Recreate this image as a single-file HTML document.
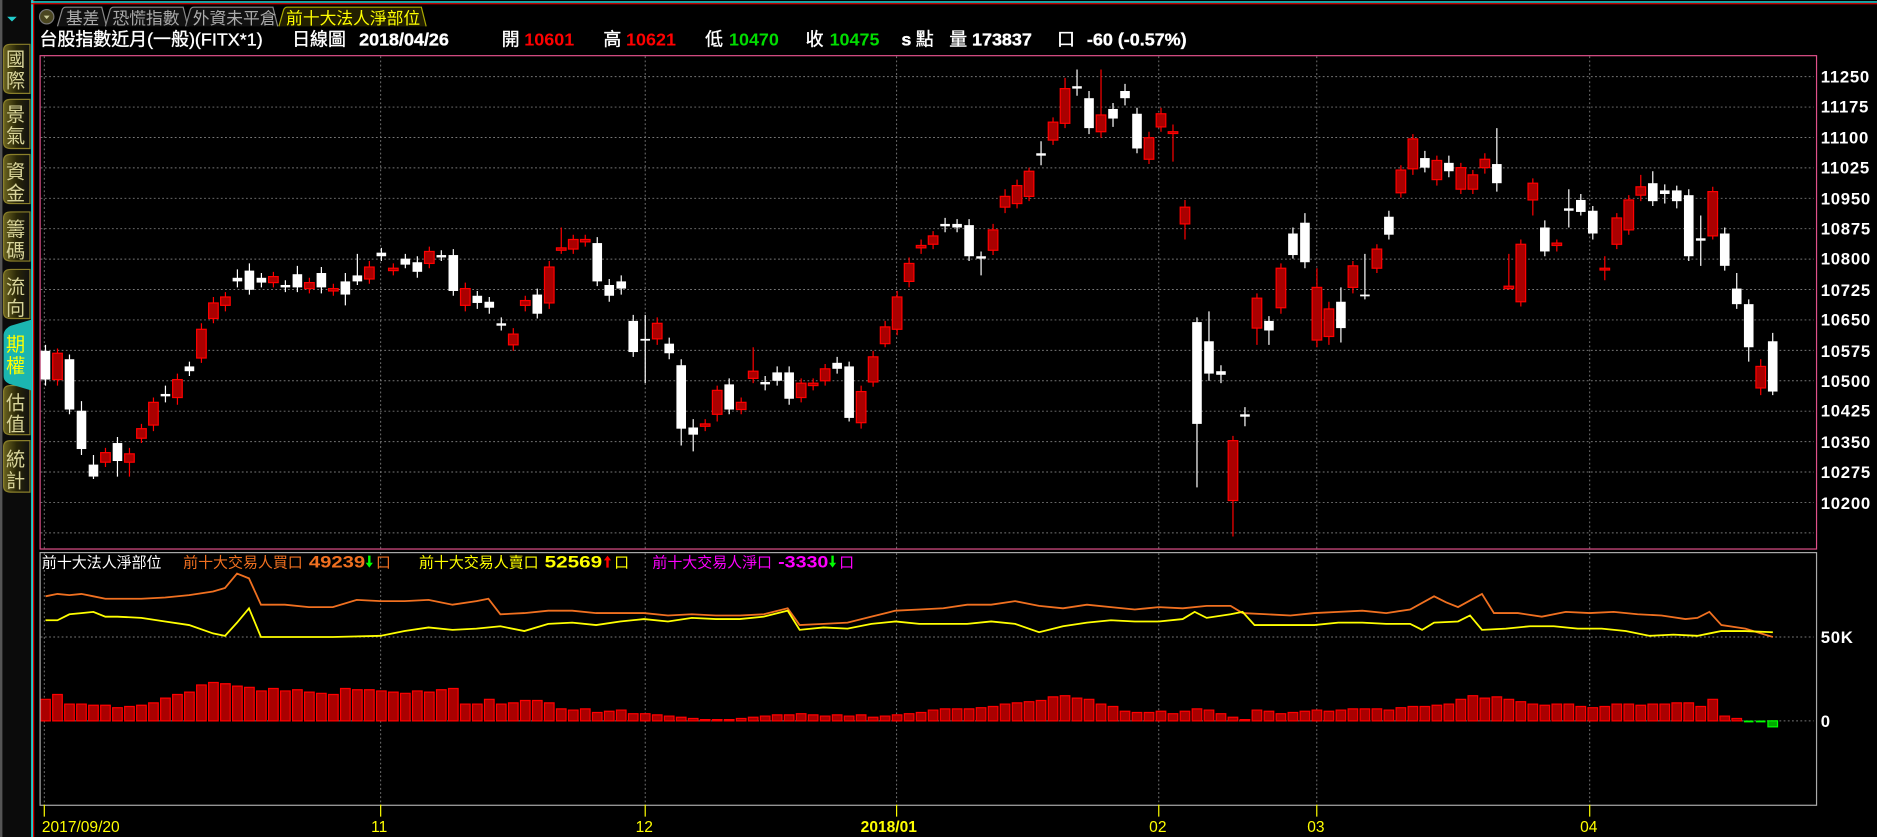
<!DOCTYPE html>
<html><head><meta charset="utf-8"><style>
html,body{margin:0;padding:0;background:#000;overflow:hidden}
svg{display:block}
text{font-family:"Liberation Sans","Noto Sans CJK TC",sans-serif}
.w rect{fill:#fff;width:8px}
.r rect{fill:#a00;stroke:#f00;stroke-width:1;width:8px}
</style></head><body>
<svg width="1877" height="837" viewBox="0 0 1568 699" preserveAspectRatio="none" xmlns="http://www.w3.org/2000/svg">
<rect width="1568" height="699" fill="#000"/>
<rect x="0" y="0" width="26" height="699" fill="#0b0b0b"/>
<rect x="0" y="0" width="2" height="699" fill="#555"/>
<path d="M6 14h8l-4 4z" fill="#2cc"/>
<rect x="26" y="0" width="1.6" height="699" fill="#2cc"/>
<rect x="27.6" y="0" width="1" height="699" fill="#d00"/>
<rect x="26" y="1" width="1542" height="1.3" fill="#2cc"/>
<rect x="26" y="2.6" width="1542" height="1" fill="#d00"/>
<defs><linearGradient id="tg" x1="0" x2="1"><stop offset="0" stop-color="#6b6420"/><stop offset=".5" stop-color="#2a2708"/><stop offset="1" stop-color="#111"/></linearGradient></defs>
<g fill="url(#tg)" stroke="#8a7f2a" stroke-width="1">
<path d="M3 42q0-5 6-5h16v41h-16q-6 0-6-5z"/>
<path d="M3 88q0-5 6-5h16v41h-16q-6 0-6-5z"/>
<path d="M3 134q0-5 6-5h16v41h-16q-6 0-6-5z"/>
<path d="M3 182q0-5 6-5h16v41h-16q-6 0-6-5z"/>
<path d="M3 230q0-5 6-5h16v41h-16q-6 0-6-5z"/>
<path d="M3 327q0-5 6-5h16v41h-16q-6 0-6-5z"/>
<path d="M3 373q0-5 6-5h16v43h-16q-6 0-6-5z"/>
</g>
<path d="M3 280q0-5 6-8l17-5v59l-17-5q-6-2-6-7z" fill="#1bb5b0"/>
<g font-size="16" fill="#d8d49a">
<text x="5" y="55">國</text><text x="5" y="73">際</text>
<text x="5" y="101">景</text><text x="5" y="119">氣</text>
<text x="5" y="149">資</text><text x="5" y="167">金</text>
<text x="5" y="197">籌</text><text x="5" y="215">碼</text>
<text x="5" y="245">流</text><text x="5" y="263">向</text>
<text x="5" y="293" fill="#ff0">期</text><text x="5" y="311" fill="#ff0">權</text>
<text x="5" y="342">估</text><text x="5" y="360">值</text>
<text x="5" y="389">統</text><text x="5" y="407">計</text>
</g>
<circle cx="39" cy="14" r="6" fill="#4a4620" stroke="#777"/>
<path d="M36.5 13h5l-2.5 3z" fill="#cc9"/>
<g fill="#111" stroke="#888" stroke-width="1">
<path d="M48 22l4-14q1-2 3-2h30l4 16"/>
<path d="M88 22l4-14q1-2 3-2h58l4 16"/>
<path d="M155 22l4-14q1-2 3-2h66l4 16"/>
</g>
<path d="M233 22l4-14q1-2 3-2h112l4 16" fill="#221f00" stroke="#aa0" stroke-width="1"/>
<g font-size="14" fill="#aaa">
<text x="55" y="20">基差</text><text x="94" y="20">恐慌指數</text><text x="161" y="20">外資未平倉</text>
</g>
<text x="239" y="20" font-size="14" fill="#ff0">前十大法人淨部位</text>
<g font-size="15" fill="#fff" stroke="#fff" stroke-width="0.3">
<text x="33" y="38">台股指數近月(一般)(FITX*1)</text>
<text x="244" y="38">日線圖</text>
<text x="300" y="38" font-weight="bold">2018/04/26</text>
<text x="419" y="38">開</text><text x="438" y="38" font-weight="bold" fill="#f00" stroke="none">10601</text>
<text x="504" y="38">高</text><text x="523" y="38" font-weight="bold" fill="#f00" stroke="none">10621</text>
<text x="589" y="38">低</text><text x="609" y="38" font-weight="bold" fill="#0d0" stroke="none">10470</text>
<text x="673" y="38">收</text><text x="693" y="38" font-weight="bold" fill="#0d0" stroke="none">10475</text>
<text x="753" y="38" font-weight="bold">s</text><text x="765" y="38">點</text>
<text x="793" y="38">量</text><text x="812" y="38" font-weight="bold">173837</text><text x="883" y="38">口</text>
<text x="908" y="38" font-weight="bold">-60 (-0.57%)</text>
</g>
<rect x="33.5" y="46.5" width="1484" height="412" fill="none" stroke="#e0508a" stroke-width="1"/>
<g stroke="#777" stroke-width="0.8" stroke-dasharray="1.5 2">
<path d="M34 64H1515M34 89.4H1515M34 114.8H1515M34 140.2H1515M34 165.6H1515M34 191H1515M34 216.4H1515M34 241.8H1515M34 267.2H1515M34 292.6H1515M34 318H1515M34 343.4H1515M34 368.8H1515M34 394.2H1515M34 419.6H1515M34 445H1515"/>
<path d="M37 47V458M318 47V458M539 47V458M749 47V458M968 47V458M1100 47V458M1328 47V458"/>
<path d="M37 462V672M318 462V672M539 462V672M749 462V672M968 462V672M1100 462V672M1328 462V672"/>
<path d="M34 532H1515M34 602H1515"/>
</g>
<g font-size="14" font-weight="bold" fill="#fff" letter-spacing="0.6">
<text x="1521" y="69">11250</text><text x="1521" y="94">11175</text><text x="1521" y="120">11100</text><text x="1521" y="145">11025</text><text x="1521" y="171">10950</text><text x="1521" y="196">10875</text><text x="1521" y="221">10800</text><text x="1521" y="247">10725</text><text x="1521" y="272">10650</text><text x="1521" y="298">10575</text><text x="1521" y="323">10500</text><text x="1521" y="348">10425</text><text x="1521" y="374">10350</text><text x="1521" y="399">10275</text><text x="1521" y="425">10200</text>
<text x="1521" y="537">50K</text><text x="1521" y="607">0</text>
</g>
<g transform="translate(34,0) scale(1.002,1)">
<path fill="none" stroke="#fff" stroke-width="1" d="M4 288V322M24 296V346M34 335V380M44 380V400M64 365V398M104 322V336M124 302V314M164 225V240M174 220V246M184 228V240M204 234V244M214 222V244M234 223V245M254 228V255M264 212V238M284 207V218M304 212V224M314 214V232M334 209V218M344 208V247M364 243V258M374 248V262M384 265V276M414 241V266M464 198V239M474 233V252M484 230V246M494 263V298M504 263V320M524 282V300M534 300V372M544 350V377M574 316V346M604 314V326M614 306V322M624 306V338M664 298V312M674 302V352M754 182V194M764 183V194M774 183V218M784 210V230M834 118V138M864 58V80M874 76V112M894 86V106M904 70V88M914 90V128M964 265V407M974 260V318M984 305V320M1004 340V356M1024 264V288M1044 190V216M1054 178V224M1084 240V286M1104 212V250M1124 176V200M1154 126V144M1174 130V148M1214 107V160M1254 184V214M1274 158V190M1284 162V180M1294 172V200M1344 143V172M1354 154V170M1364 155V174M1374 158V218M1384 180V222M1404 190V226M1414 228V258M1424 250V302M1444 278V330"/>
<path fill="none" stroke="#f00" stroke-width="1" d="M14 291V322M54 374V390M74 374V398M84 354V370M94 332V360M114 312V338M134 270V303M144 248V270M154 244V260M194 227V240M224 232V245M244 237V247M274 218V237M294 220V230M324 206V224M354 236V260M394 274V293M404 247V260M424 218V258M434 190V212M444 196V212M454 196V206M514 265V288M554 350V360M564 322V352M584 332V346M594 290V320M634 316V336M644 316V326M654 304V322M684 322V358M694 293V323M704 268V290M714 243V280M724 215V240M734 200V212M744 193V208M794 187V213M804 158V178M814 150V174M824 140V168M844 98V121M854 65V107M884 58V115M924 110V137M934 90V110M944 104V135M954 167V200M994 364V448M1014 245V288M1034 220V262M1064 224V290M1074 252V288M1094 218V245M1114 204V228M1134 138V165M1144 112V146M1164 130V155M1184 136V162M1194 142V162M1204 128V145M1224 212V242M1234 200V256M1244 149V180M1264 200V210M1304 214V234M1314 178V208M1324 163V196M1334 146V168M1394 156V200M1434 300V330"/>
<g class="w">
<rect x="0" y="293" height="24"/><rect x="20" y="300" height="42"/><rect x="30" y="343" height="32"/><rect x="40" y="388" height="10"/><rect x="60" y="370" height="15"/><rect x="100" y="329" height="2"/><rect x="120" y="306" height="4"/><rect x="160" y="232" height="3"/><rect x="170" y="226" height="16"/><rect x="180" y="232" height="4"/><rect x="200" y="238" height="2"/><rect x="210" y="229" height="11"/><rect x="230" y="228" height="12"/><rect x="250" y="235" height="11"/><rect x="260" y="230" height="5"/><rect x="280" y="211" height="3"/><rect x="300" y="216" height="5"/><rect x="310" y="219" height="8"/><rect x="330" y="213" height="2"/><rect x="340" y="213" height="30"/><rect x="360" y="247" height="6"/><rect x="370" y="252" height="5"/><rect x="380" y="270" height="2"/><rect x="410" y="246" height="16"/><rect x="460" y="203" height="32"/><rect x="470" y="238" height="9"/><rect x="480" y="235" height="6"/><rect x="490" y="268" height="26"/><rect x="500" y="283" height="1.5"/><rect x="520" y="287" height="8"/><rect x="530" y="305" height="53"/><rect x="540" y="357" height="6"/><rect x="570" y="321" height="21"/><rect x="600" y="319" height="2"/><rect x="610" y="311" height="7"/><rect x="620" y="311" height="22"/><rect x="660" y="303" height="5"/><rect x="670" y="306" height="43"/><rect x="750" y="187" height="2"/><rect x="760" y="187" height="3"/><rect x="770" y="188" height="26"/><rect x="780" y="214" height="2"/><rect x="830" y="128" height="2"/><rect x="860" y="72" height="2"/><rect x="870" y="82" height="25"/><rect x="890" y="91" height="8"/><rect x="900" y="76" height="6"/><rect x="910" y="95" height="29"/><rect x="960" y="269" height="85"/><rect x="970" y="285" height="27"/><rect x="980" y="310" height="3"/><rect x="1000" y="346" height="2"/><rect x="1020" y="268" height="8"/><rect x="1040" y="195" height="18"/><rect x="1050" y="186" height="33"/><rect x="1080" y="252" height="22"/><rect x="1100" y="246" height="1.5"/><rect x="1120" y="181" height="15"/><rect x="1150" y="132" height="8"/><rect x="1170" y="136" height="7"/><rect x="1210" y="137" height="16"/><rect x="1250" y="190" height="20"/><rect x="1270" y="174" height="2"/><rect x="1280" y="167" height="10"/><rect x="1290" y="176" height="19"/><rect x="1340" y="153" height="15"/><rect x="1350" y="159" height="3"/><rect x="1360" y="159" height="9"/><rect x="1370" y="163" height="51"/><rect x="1380" y="199" height="2"/><rect x="1400" y="195" height="27"/><rect x="1410" y="241" height="13"/><rect x="1420" y="254" height="36"/><rect x="1440" y="285" height="42"/>
</g>
<g class="r">
<rect x="10" y="295" height="22"/><rect x="50" y="378" height="8"/><rect x="70" y="379" height="7"/><rect x="80" y="358" height="8"/><rect x="90" y="336" height="19"/><rect x="110" y="317" height="15"/><rect x="130" y="275" height="24"/><rect x="140" y="253" height="13"/><rect x="150" y="248" height="7"/><rect x="190" y="231" height="5"/><rect x="220" y="236" height="5"/><rect x="240" y="241" height="2"/><rect x="270" y="223" height="10"/><rect x="290" y="224" height="2"/><rect x="320" y="210" height="10"/><rect x="350" y="241" height="14"/><rect x="390" y="279" height="9"/><rect x="400" y="251" height="4"/><rect x="420" y="223" height="30"/><rect x="430" y="207" height="2"/><rect x="440" y="200" height="8"/><rect x="450" y="200" height="2"/><rect x="510" y="270" height="13"/><rect x="550" y="354" height="2"/><rect x="560" y="326" height="20"/><rect x="580" y="336" height="6"/><rect x="590" y="310" height="6"/><rect x="630" y="320" height="12"/><rect x="640" y="320" height="2"/><rect x="650" y="308" height="10"/><rect x="680" y="327" height="26"/><rect x="690" y="298" height="21"/><rect x="700" y="273" height="14"/><rect x="710" y="248" height="27"/><rect x="720" y="220" height="15"/><rect x="730" y="205" height="2"/><rect x="740" y="197" height="7"/><rect x="790" y="192" height="17"/><rect x="800" y="164" height="9"/><rect x="810" y="155" height="15"/><rect x="820" y="143" height="21"/><rect x="840" y="102" height="15"/><rect x="850" y="74" height="29"/><rect x="880" y="96" height="14"/><rect x="920" y="115" height="18"/><rect x="930" y="95" height="11"/><rect x="940" y="110" height="1.5"/><rect x="950" y="173" height="14"/><rect x="990" y="368" height="50"/><rect x="1010" y="249" height="25"/><rect x="1030" y="224" height="33"/><rect x="1060" y="240" height="44"/><rect x="1070" y="258" height="23"/><rect x="1090" y="222" height="18"/><rect x="1110" y="208" height="16"/><rect x="1130" y="142" height="19"/><rect x="1140" y="116" height="25"/><rect x="1160" y="134" height="16"/><rect x="1180" y="140" height="18"/><rect x="1190" y="146" height="12"/><rect x="1200" y="133" height="7"/><rect x="1220" y="239" height="2"/><rect x="1230" y="204" height="48"/><rect x="1240" y="153" height="14"/><rect x="1260" y="203" height="2"/><rect x="1300" y="224" height="1.5"/><rect x="1310" y="182" height="22"/><rect x="1320" y="167" height="25"/><rect x="1330" y="156" height="7"/><rect x="1390" y="160" height="37"/><rect x="1430" y="306" height="18"/>
</g>
<path fill="#a00" stroke="#f00" stroke-width="1" d="M0 584h8v18h-8zM10 580h8v22h-8zM20 588h8v14h-8zM30 588h8v14h-8zM40 589h8v13h-8zM50 589h8v13h-8zM60 591h8v11h-8zM70 590h8v12h-8zM80 589h8v13h-8zM90 587h8v15h-8zM100 583h8v19h-8zM110 580h8v22h-8zM120 578h8v24h-8zM130 572h8v30h-8zM140 570h8v32h-8zM150 571h8v31h-8zM160 573h8v29h-8zM170 574h8v28h-8zM180 577h8v25h-8zM190 575h8v27h-8zM200 577h8v25h-8zM210 576h8v26h-8zM220 578h8v24h-8zM230 579h8v23h-8zM240 580h8v22h-8zM250 575h8v27h-8zM260 576h8v26h-8zM270 576h8v26h-8zM280 577h8v25h-8zM290 578h8v24h-8zM300 579h8v23h-8zM310 577h8v25h-8zM320 578h8v24h-8zM330 576h8v26h-8zM340 575h8v27h-8zM350 588h8v14h-8zM360 588h8v14h-8zM370 584h8v18h-8zM380 588h8v14h-8zM390 587h8v15h-8zM400 585h8v17h-8zM410 585h8v17h-8zM420 587h8v15h-8zM430 592h8v10h-8zM440 593h8v9h-8zM450 592h8v10h-8zM460 595h8v7h-8zM470 594h8v8h-8zM480 593h8v9h-8zM490 596h8v6h-8zM500 596h8v6h-8zM510 597h8v5h-8zM520 598h8v4h-8zM530 599h8v3h-8zM540 600h8v2h-8zM550 601h8v1h-8zM560 601h8v1h-8zM570 601h8v1h-8zM580 600h8v2h-8zM590 599h8v3h-8zM600 598h8v4h-8zM610 597h8v5h-8zM620 597h8v5h-8zM630 596h8v6h-8zM640 597h8v5h-8zM650 598h8v4h-8zM660 597h8v5h-8zM670 598h8v4h-8zM680 597h8v5h-8zM690 599h8v3h-8zM700 598h8v4h-8zM710 597h8v5h-8zM720 596h8v6h-8zM730 595h8v7h-8zM740 593h8v9h-8zM750 592h8v10h-8zM760 592h8v10h-8zM770 592h8v10h-8zM780 591h8v11h-8zM790 590h8v12h-8zM800 588h8v14h-8zM810 587h8v15h-8zM820 586h8v16h-8zM830 585h8v17h-8zM840 582h8v20h-8zM850 581h8v21h-8zM860 583h8v19h-8zM870 584h8v18h-8zM880 588h8v14h-8zM890 590h8v12h-8zM900 594h8v8h-8zM910 595h8v7h-8zM920 595h8v7h-8zM930 594h8v8h-8zM940 596h8v6h-8zM950 594h8v8h-8zM960 592h8v10h-8zM970 593h8v9h-8zM980 596h8v6h-8zM990 599h8v3h-8zM1000 601h8v1h-8zM1010 593h8v9h-8zM1020 594h8v8h-8zM1030 596h8v6h-8zM1040 595h8v7h-8zM1050 594h8v8h-8zM1060 593h8v9h-8zM1070 594h8v8h-8zM1080 593h8v9h-8zM1090 592h8v10h-8zM1100 592h8v10h-8zM1110 592h8v10h-8zM1120 593h8v9h-8zM1130 591h8v11h-8zM1140 590h8v12h-8zM1150 590h8v12h-8zM1160 589h8v13h-8zM1170 588h8v14h-8zM1180 584h8v18h-8zM1190 581h8v21h-8zM1200 583h8v19h-8zM1210 582h8v20h-8zM1220 584h8v18h-8zM1230 586h8v16h-8zM1240 588h8v14h-8zM1250 589h8v13h-8zM1260 588h8v14h-8zM1270 588h8v14h-8zM1280 590h8v12h-8zM1290 591h8v11h-8zM1300 590h8v12h-8zM1310 588h8v14h-8zM1320 588h8v14h-8zM1330 589h8v13h-8zM1340 588h8v14h-8zM1350 588h8v14h-8zM1360 587h8v15h-8zM1370 587h8v15h-8zM1380 590h8v12h-8zM1390 584h8v18h-8zM1400 598h8v4h-8zM1410 600h8v2h-8z"/>
<path fill="none" stroke="#0f0" stroke-width="1.5" d="M1420 602.5h8M1430 602.5h8"/>
<rect x="1440" y="602" width="8" height="5" fill="#0a0" stroke="#0f0" stroke-width="1"/>
</g>
<rect x="33.5" y="461.5" width="1484" height="211" fill="none" stroke="#aaa" stroke-width="1"/>
<polyline fill="none" stroke="#f07020" stroke-width="1.5" points="38,498 48,496 58,497 68,496 78,498 88,500 98,500 118,500 138,499 158,497 178,494 188,491 198,479 208,483 218,505 238,505 258,507 278,507 298,501 318,502 338,502 358,501 378,505 398,502 408,500 418,513 438,512 458,510 478,510 498,512 538,512 558,514 578,513 598,514 618,514 638,513 658,508 668,522 688,521 708,520 728,515 748,510 768,509 788,508 808,505 828,505 848,502 868,506 888,508 908,505 928,507 948,509 968,507 988,508 1008,506 1028,506 1038,512 1058,513 1078,514 1098,512 1118,511 1138,510 1158,512 1178,509 1198,498 1208,503 1218,507 1238,496 1248,512 1268,512 1288,515 1308,511 1328,512 1348,511 1368,513 1388,514 1408,517 1418,516 1428,511 1438,522 1458,525 1481,532"/>
<polyline fill="none" stroke="#ff0" stroke-width="1.5" points="38,518 48,518 58,513 68,512 78,511 88,515 98,515 118,516 138,519 158,522 178,529 188,531 198,520 208,508 218,532 258,532 278,532 318,531 338,527 358,524 378,526 398,525 418,523 438,527 458,521 478,520 498,522 518,519 538,517 558,519 578,516 598,517 618,517 638,515 658,510 668,526 688,524 708,525 728,521 748,519 768,521 788,521 808,521 828,519 848,521 868,528 888,523 908,520 928,518 948,519 968,519 988,517 998,511 1008,516 1028,513 1038,511 1048,522 1078,522 1098,522 1118,520 1138,520 1158,521 1178,521 1188,526 1198,520 1218,519 1228,514 1238,526 1258,525 1278,523 1298,523 1318,525 1338,525 1358,527 1378,531 1398,530 1418,531 1428,529 1438,527 1458,527 1481,528"/>
<g font-size="12.5">
<text x="35" y="474" fill="#fff">前十大法人淨部位</text>
<text x="153" y="474" fill="#f07020">前十大交易人買口</text>
<text x="258" y="474" fill="#f07020" font-weight="bold" font-size="14" textLength="47" lengthAdjust="spacingAndGlyphs">49239</text>
<text x="314" y="474" fill="#f07020">口</text>
<text x="350" y="474" fill="#ff0">前十大交易人賣口</text>
<text x="455" y="474" fill="#ff0" font-weight="bold" font-size="14" textLength="48" lengthAdjust="spacingAndGlyphs">52569</text>
<text x="513" y="474" fill="#ff0">口</text>
<text x="545" y="474" fill="#f0f">前十大交易人淨口</text>
<text x="650" y="474" fill="#f0f" font-weight="bold" font-size="14" textLength="42" lengthAdjust="spacingAndGlyphs">-3330</text>
<text x="701" y="474" fill="#f0f">口</text>
</g>
<path d="M307.5 464h2v6h2l-3 4l-3-4h2z" fill="#0f0"/>
<path d="M506.5 474h2v-6h2l-3-4l-3 4h2z" fill="#f00"/>
<path d="M694.5 464h2v6h2l-3 4l-3-4h2z" fill="#0f0"/>
<path d="M37 672V682M318 672V682M539 672V682M749 672V682M968 672V682M1100 672V682M1328 672V682" stroke="#ff0" stroke-width="1"/>
<g font-size="13" fill="#ff0">
<text x="35" y="695">2017/09/20</text><text x="310" y="695">11</text><text x="531" y="695">12</text>
<text x="719" y="695" font-weight="bold">2018/01</text><text x="960" y="695">02</text><text x="1092" y="695">03</text><text x="1320" y="695">04</text>
</g>
</svg>
</body></html>
